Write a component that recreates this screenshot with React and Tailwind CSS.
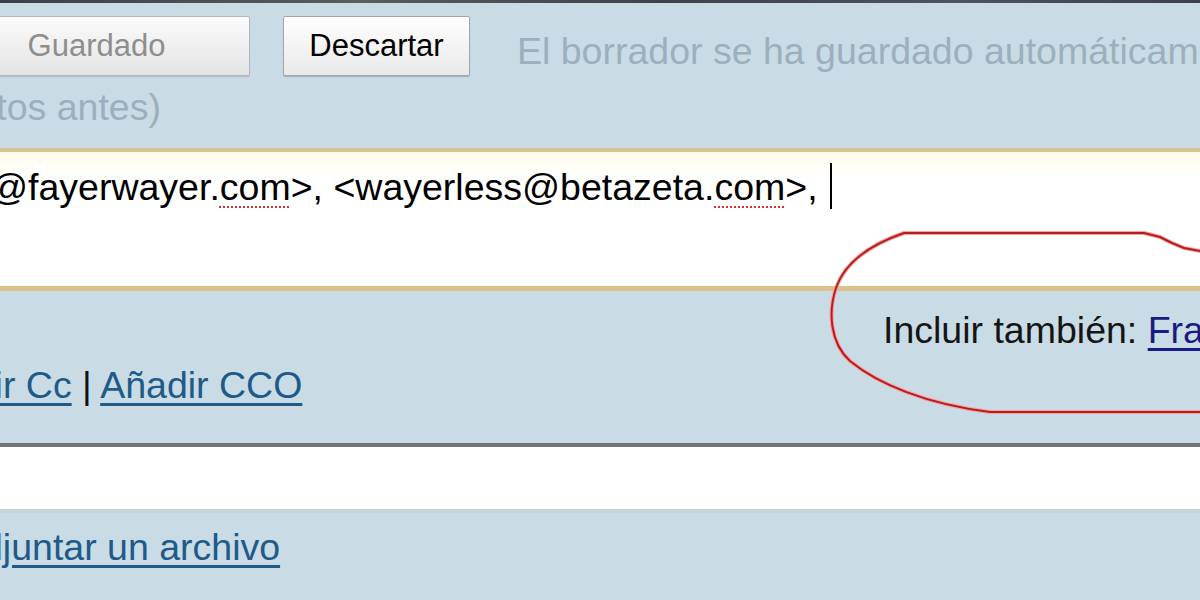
import React from 'react';

const font = { fontFamily: '"Liberation Sans", Arial, sans-serif' };

const Spell = ({ children }) => (
  <span className="underline decoration-dotted decoration-[#d03030] decoration-2 underline-offset-[6px]">
    {children}
  </span>
);

const RedCircle = () => (
  <svg
    className="pointer-events-none absolute inset-0"
    width="1200"
    height="600"
    viewBox="0 0 1200 600"
  >
    <path
      d="M1200 251 L1184 248 L1172 243 L1160 237 L1144 233 L904 233 C872 244 845 262 836 288 C828 312 830 343 850 361 C878 384 926 404 990 412 L1200 412"
      fill="none"
      stroke="#f4a0a0"
      strokeWidth="4"
      strokeLinejoin="round"
    />
    <path
      d="M1200 251 L1184 248 L1172 243 L1160 237 L1144 233 L904 233 C872 244 845 262 836 288 C828 312 830 343 850 361 C878 384 926 404 990 412 L1200 412"
      fill="none"
      stroke="#b81c1c"
      strokeWidth="2"
      strokeLinejoin="round"
    />
  </svg>
);

export default function App() {
  return (
    <div
      className="relative h-[600px] w-[1200px] overflow-hidden bg-[#c9dce5] text-[37.5px] leading-[38px]"
      style={font}
    >
      <div className="h-[3px] bg-[linear-gradient(90deg,#3a4046,#55605a_30%,#3b434a_55%,#4a5560_80%,#39424a)]" />

      {/* toolbar */}
      <div className="h-[145px] whitespace-nowrap">
        <div className="flex items-start">
          <button className="ml-[-57px] mt-[13px] flex h-[60px] w-[307px] shrink-0 items-center justify-center rounded-[2px] border border-[#b4b8ba] bg-gradient-to-b from-[#fbfbfb] to-[#e4e4e4] text-[31px] text-[#8e8e8e] shadow-[0_1px_1px_rgba(0,0,0,0.15)]">
            Guardado
          </button>
          <button className="ml-[33px] mt-[13px] flex h-[60px] w-[187px] shrink-0 items-center justify-center rounded-[2px] border border-[#a3a7aa] bg-gradient-to-b from-white to-[#e9e9e9] text-[31px] text-black shadow-[0_1px_1px_rgba(0,0,0,0.2)]">
            Descartar
          </button>
          <span className="ml-[47px] mt-[29px] shrink-0 text-[#9bb0bc]">
            El borrador se ha guardado automáticamente
          </span>
        </div>
        <div className="ml-[-85px] mt-[12px] text-[#9bb0bc]">minutos antes)</div>
      </div>

      {/* recipients box */}
      <div className="h-[143px] border-b-[5px] border-t-4 border-b-[#dcc08e] border-t-[#d8c493] bg-[linear-gradient(180deg,#fffbea,#ffffff_18%,#ffffff)] pt-[16px]">
        <div className="ml-[-10px] flex items-start whitespace-nowrap text-black">
          <span className="shrink-0">
            @fayerwayer.<Spell>com</Spell>&gt;, &lt;wayerless@betazeta.<Spell>com</Spell>&gt;,
          </span>
          <span className="ml-[12px] mt-[-5px] h-[46px] w-[2px] shrink-0 bg-black" />
        </div>
      </div>

      {/* include / cc row */}
      <div className="h-[152px] whitespace-nowrap">
        <div className="pl-[883px] pt-[20px] text-[#151515]">
          Incluir también:{' '}
          <a className="text-[#1a1a84] underline underline-offset-[5px]">Francisco</a>
        </div>
        <div className="ml-[-93px] mt-[17px] text-[#111]">
          <a className="text-[#205a88] underline underline-offset-[5px]">Añadir Cc</a>
          {' | '}
          <a className="text-[#205a88] underline underline-offset-[5px]">Añadir CCO</a>
        </div>
      </div>

      {/* subject field */}
      <div className="h-[70px] border-b-4 border-t-4 border-b-[#c9d2d5] border-t-[#6e7678] bg-white" />

      {/* attach */}
      <div className="ml-[-43px] whitespace-nowrap pt-[15px]">
        <a className="text-[#205a88] underline underline-offset-[5px]">Adjuntar un archivo</a>
      </div>

      <RedCircle />
    </div>
  );
}
